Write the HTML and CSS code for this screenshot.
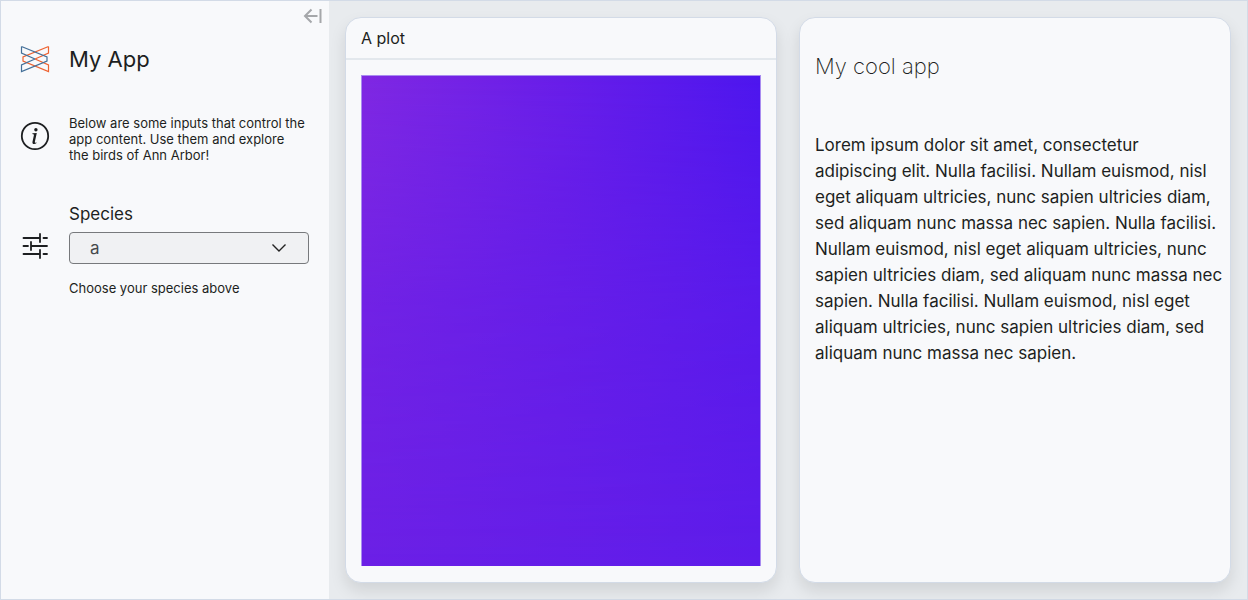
FILE: index.html
```html
<!DOCTYPE html>
<html lang="en">
<head>
<meta charset="utf-8">
<title>My App</title>
<link rel="stylesheet" href="styles.css">
</head>
<body>
<div class="app">
  <aside class="sidebar">
    <button class="collapse" type="button" aria-label="Collapse sidebar">
      <svg width="20" height="16" viewBox="0 0 20 16" fill="none" stroke="currentColor" stroke-width="2"><path d="M8.500 1.500L2 8l6.500 6.500M2 8h12.500M17.500 1v14"/></svg>
    </button>
    <header class="row">
      <svg class="icon" viewBox="0 0 30 30" fill="none" stroke-width="1.200">
        <path stroke="#ee6331" d="M28.500 2.500v6.500L15 15M28.500 2.500L3 13v4L28.500 27.500V21L15 15"/>
        <path stroke="#447099" d="M1.500 2.500v6.500L15 15M1.500 2.500L27 13v4L1.500 27.500V21L15 15"/>
      </svg>
      <h1 class="title">My App</h1>
    </header>
    <section class="row about">
      <svg class="icon raised" viewBox="0 0 30 30">
        <circle cx="15" cy="15" r="13.200" fill="none" stroke="currentColor" stroke-width="1.800"/>
        <circle cx="15.900" cy="8.700" r="1.700" fill="currentColor"/>
        <path fill="currentColor" d="M16.800 12L14.900 20.500c-.2 1 .1 1.300.6 1.200.4 0 .7-.2 1-.4l-.2 1c-.5.500-1.400.8-2.200.8-1.300 0-1.900-.8-1.600-2.300l1.400-6.500c.1-.7 0-.9-.7-1.100l-.9-.2.200-.7z"/>
      </svg>
      <p class="small">Below are some inputs that control the app content. Use them and explore the birds of Ann Arbor!</p>
    </section>
    <section class="row controls">
      <svg class="icon raised" viewBox="0 0 30 30" fill="none" stroke="currentColor" stroke-width="1.800" stroke-linecap="round"><path d="M3.500 7h16M20 3v8M23.500 7h3.500M3.500 15h4.500M11 11v8M11 15h16M3.500 23h16M20 19v8M23.500 23h3.500"/></svg>
      <div class="field">
        <label class="label" for="species">Species</label>
        <select class="select" id="species"><option>a</option><option>b</option><option>c</option></select>
        <p class="small">Choose your species above</p>
      </div>
    </section>
  </aside>
  <main class="main">
    <article class="card">
      <h2 class="card-header">A plot</h2>
      <div class="card-body"><div class="plot" role="img" aria-label="Plot"></div></div>
    </article>
    <article class="card">
      <div class="card-text">
        <h2 class="headline">My cool app</h2>
        <p class="copy">Lorem ipsum dolor sit amet, consectetur adipiscing elit. Nulla facilisi. Nullam euismod, nisl eget aliquam ultricies, nunc sapien ultricies diam, sed aliquam nunc massa nec sapien. Nulla facilisi. Nullam euismod, nisl eget aliquam ultricies, nunc sapien ultricies diam, sed aliquam nunc massa nec sapien. Nulla facilisi. Nullam euismod, nisl eget aliquam ultricies, nunc sapien ultricies diam, sed aliquam nunc massa nec sapien.</p>
      </div>
    </article>
  </main>
</div>
</body>
</html>
```
FILE: styles.css
```css
* { box-sizing: border-box; margin: 0; }
body { font-family: Inter, "Liberation Sans", sans-serif; font-size: 16px; color: #1d1f21; }
.app { display: flex; min-height: 100vh; border: 1px solid #d3dbe7; background: #e8ebee; }
.sidebar { position: relative; flex: 0 0 328px; padding: 40px 20px 20px; background: #f8f9fb; }
.collapse { position: absolute; top: 7px; right: 6px; display: flex; padding: 0; border: 0; background: none; color: #a5a7aa; }
.row { display: grid; grid-template-columns: 28px 1fr; gap: 20px; align-items: center; }
.icon { width: 30px; height: 30px; margin-left: -1px; }
.raised { margin-bottom: 6px; }
.title { font-size: 22px; line-height: 36px; font-weight: 400; }
.about { margin-top: 38px; }
.small { padding-right: 4px; font-size: 13px; line-height: 16px; }
.controls { margin-top: 39px; }
.field { display: flex; flex-direction: column; }
.label { font-size: 17px; line-height: 24px; }
.select {
  appearance: none; height: 32px; margin: 6px 0 16px; padding: 0 20px;
  border: 1px solid #77797c; border-radius: 4px; color: #46494c;
  background: #f0f1f3 url("data:image/svg+xml,%3Csvg xmlns='http://www.w3.org/2000/svg' width='16' height='16' viewBox='0 0 16 16'%3E%3Cpath d='M1.500 4.500L8 11l6.500-6.500' fill='none' stroke='%23222' stroke-width='1.400'/%3E%3C/svg%3E") no-repeat right 21px center;
  font: inherit; font-size: 17px;
}
.main { flex: 1; display: grid; grid-template-columns: 1fr 1fr; gap: 22px; padding: 16px; }
.card { display: flex; flex-direction: column; overflow: hidden; border: 1px solid #d3dbe7; border-radius: 16px; background: #f8f9fb; box-shadow: 0 8px 16px rgba(0, 0, 0, .1); }
.card-header { padding: 8px 15px; border-bottom: 2px solid #e3e8ed; font-size: 16px; line-height: 24px; font-weight: 400; }
.card-body { flex: 1; display: flex; padding: 15px 15px 16px; }
.plot { flex: 1; border: 1px solid #a98cf0; border-bottom: 0; background: linear-gradient(90deg, #6c20e6, #5e1ceb); }
.plot::before { content: ""; display: block; height: 100%; background: linear-gradient(90deg, #7f28e2, #681ee8 50%, #4d16ee); mask-image: linear-gradient(#000, rgba(0, 0, 0, .3) 45%, transparent); }
.card-text { padding: 32px 7px 32px 15px; }
.headline { font-size: 22px; line-height: 32px; font-weight: 200; }
.copy { margin-top: 50px; font-size: 17px; line-height: 26px; }
```
